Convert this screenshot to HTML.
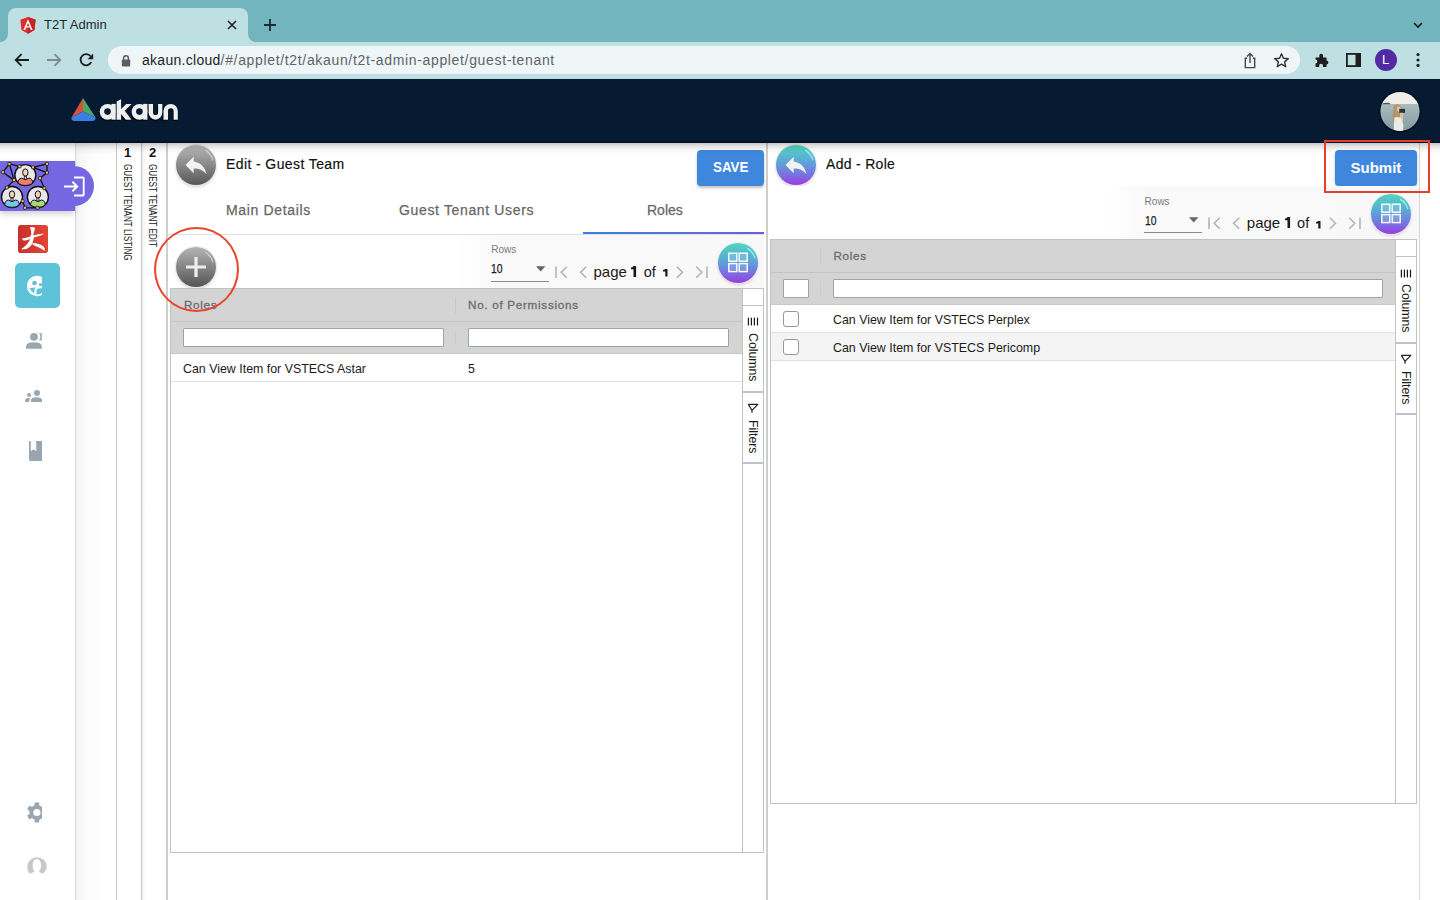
<!DOCTYPE html>
<html><head><meta charset="utf-8">
<style>
*{box-sizing:border-box;margin:0;padding:0}
html,body{width:1440px;height:900px;overflow:hidden;background:#fff;font-family:"Liberation Sans",sans-serif;}
.a{position:absolute}
.t{position:absolute;line-height:1;white-space:nowrap}
</style></head><body>
<!-- browser chrome -->
<div class="a" style="left:0;top:0;width:1440px;height:42px;background:#72b5be"></div>
<div class="a" style="left:8px;top:8px;width:240px;height:34px;background:#bfe0e3;border-radius:8px 8px 0 0"></div>
<div class="a" style="left:0;top:42px;width:1440px;height:37px;background:#bfe0e3"></div>
<div class="a" style="left:108px;top:46px;width:1192px;height:28px;background:#eef6f7;border-radius:14px"></div>


<!-- tab curves -->
<div class="a" style="left:0;top:34px;width:8px;height:8px;background:#bfe0e3"></div>
<div class="a" style="left:0;top:34px;width:8px;height:8px;background:#72b5be;border-radius:0 0 8px 0"></div>
<div class="a" style="left:248px;top:34px;width:8px;height:8px;background:#bfe0e3"></div>
<div class="a" style="left:248px;top:34px;width:8px;height:8px;background:#72b5be;border-radius:0 0 0 8px"></div>
<!-- angular icon -->
<svg class="a" style="left:20px;top:17px" width="16" height="17" viewBox="0 0 16 17">
<path d="M8 0L15.6 2.8 14.5 13 8 16.8 1.5 13 .4 2.8Z" fill="#dd2c2c"/>
<path d="M8 0L15.6 2.8 14.5 13 8 16.8Z" fill="#c42626"/>
<path d="M8 2.2L3.4 13h1.8l.95-2.4h3.7l.95 2.4h1.8ZM8 5.9l1.45 3.3h-2.9Z" fill="#fff" fill-rule="evenodd"/>
</svg>
<div class="t" style="left:44px;top:18px;font-size:13px;color:#1d2a2c;letter-spacing:0px">T2T Admin</div>
<svg class="a" style="left:226px;top:19px" width="12" height="12" viewBox="0 0 12 12"><path d="M2 2L10 10M10 2L2 10" stroke="#1b1b1b" stroke-width="1.5"/></svg>
<svg class="a" style="left:262px;top:17px" width="16" height="16" viewBox="0 0 16 16"><path d="M8 2V14M2 8H14" stroke="#1f2a2c" stroke-width="1.8"/></svg>
<svg class="a" style="left:1410px;top:19px" width="16" height="12" viewBox="0 0 16 12"><path d="M4 4L8 8 12 4" stroke="#111" stroke-width="1.6" fill="none"/></svg>

<!-- nav -->
<svg class="a" style="left:13px;top:52px" width="18" height="16" viewBox="0 0 18 16"><path d="M16 8H3M8.5 2.2L2.7 8 8.5 13.8" stroke="#1c1c1c" stroke-width="1.8" fill="none"/></svg>
<svg class="a" style="left:45px;top:52px" width="18" height="16" viewBox="0 0 18 16"><path d="M2 8H15M9.5 2.2L15.3 8 9.5 13.8" stroke="#7d8d8f" stroke-width="1.8" fill="none"/></svg>
<svg class="a" style="left:78px;top:52px" width="17" height="16" viewBox="0 0 17 16"><path d="M13.2 10.2A5.6 5.6 0 1 1 12.6 4.2" stroke="#1c1c1c" stroke-width="1.8" fill="none"/><path d="M15.2 1.6V7.2H9.6Z" fill="#1c1c1c"/></svg>
<!-- lock -->
<svg class="a" style="left:121px;top:54px" width="10" height="13" viewBox="0 0 10 13"><path d="M2.6 6V4.2A2.4 2.4 0 0 1 7.4 4.2V6" stroke="#5b5f61" stroke-width="1.5" fill="none"/><rect x=".8" y="5.6" width="8.4" height="6.8" rx="1" fill="#5b5f61"/></svg>
<div class="t" style="left:142px;top:53px;font-size:14px;color:#1f1f1f;letter-spacing:.28px">akaun.cloud<span style="color:#5f6368;letter-spacing:.66px">/#/applet/t2t/akaun/t2t-admin-applet/guest-tenant</span></div>
<!-- right toolbar icons -->
<svg class="a" style="left:1242px;top:52px" width="16" height="17" viewBox="0 0 16 17"><path d="M5.2 6.3H3.3V15.6H12.7V6.3H10.8" stroke="#474747" stroke-width="1.4" fill="none"/><path d="M8 11V1.8M5 4.6L8 1.6 11 4.6" stroke="#474747" stroke-width="1.4" fill="none"/></svg>
<svg class="a" style="left:1273px;top:52px" width="17" height="17" viewBox="0 0 17 17"><path d="M8.5 1.8L10.4 6.3 15.3 6.7 11.6 9.9 12.7 14.7 8.5 12.2 4.3 14.7 5.4 9.9 1.7 6.7 6.6 6.3Z" stroke="#333" stroke-width="1.4" fill="none" stroke-linejoin="round"/></svg>
<svg class="a" style="left:1314px;top:52px" width="16" height="16" viewBox="0 0 16 16"><path d="M1.5 5.5H5.3V3.6A1.9 1.9 0 0 1 9.1 3.6V5.5H12.5V8.6A1.9 1.9 0 0 1 12.5 12.4V15H9V13.6A1.9 1.9 0 0 0 5.2 13.6V15H1.5V11.4A1.9 1.9 0 0 0 1.5 7.6Z" fill="#1f1f1f"/></svg>
<svg class="a" style="left:1346px;top:53px" width="16" height="14" viewBox="0 0 16 14"><rect x=".9" y=".9" width="13.2" height="12.2" fill="none" stroke="#1f1f1f" stroke-width="1.8"/><rect x="9.5" y="1" width="5" height="12" fill="#1f1f1f"/></svg>
<div class="a" style="left:1375px;top:49px;width:22px;height:22px;border-radius:50%;background:#4f2aa4"></div>
<div class="t" style="left:1382px;top:53px;font-size:13px;color:#fff">L</div>
<svg class="a" style="left:1414px;top:52px" width="8" height="16" viewBox="0 0 8 16"><circle cx="4" cy="2.6" r="1.6" fill="#1f1f1f"/><circle cx="4" cy="8" r="1.6" fill="#1f1f1f"/><circle cx="4" cy="13.4" r="1.6" fill="#1f1f1f"/></svg>

<!-- header -->
<div class="a" style="left:0;top:79px;width:1440px;height:63.5px;background:linear-gradient(180deg,#061a31 0,#061a31 96%,#000a24 100%)"></div>


<!-- logo -->
<svg class="a" style="left:69px;top:96px" width="30" height="28" viewBox="0 0 30 28">
<path d="M14 2L2.5 21.5 14 15.5Z" fill="#d9503b"/>
<path d="M14 2L26.5 21.5 14 15.5Z" fill="#4aa864"/>
<path d="M14 15.5L2.5 21.5Q2 24.5 5 25H23.5Q27 24.5 26.5 21.5Z" fill="#3a7fe6"/>
</svg>
<svg class="a" style="left:96px;top:94px" width="88" height="32" viewBox="0 0 88 32">
<g fill="#000510" transform="translate(-.9 1.3)"><circle cx="11.6" cy="17.8" r="7.9"/><rect x="15.5" y="9.9" width="4.2" height="15.8"/>
<path d="M20.6 7.4L25.1 5.3V25.7H20.6Z"/><path d="M24.6 15.6L30.2 9.9H35.6L28.8 16.8 35.4 25.7H29.8L24.6 19.6Z"/>
<circle cx="43.5" cy="17.8" r="7.9"/><rect x="47.2" y="9.9" width="4.2" height="15.8"/>
<path d="M52.6 9.9H57V18.4A2.55 2.55 0 0 0 62.1 18.4V9.9H66.3V18.6A6.85 7.1 0 0 1 52.6 18.6Z"/>
<path d="M67.5 25.7V17A7.15 7.1 0 0 1 81.8 17V25.7H77.6V17A2.8 2.7 0 0 0 72 17V25.7Z"/></g>
<g fill="#000510" transform="translate(-.9 1.3)"></g>
<g fill="#efefef"><circle cx="11.6" cy="17.8" r="7.9"/><rect x="15.5" y="9.9" width="4.2" height="15.8"/>
<path d="M20.6 7.4L25.1 5.3V25.7H20.6Z"/><path d="M24.6 15.6L30.2 9.9H35.6L28.8 16.8 35.4 25.7H29.8L24.6 19.6Z"/>
<circle cx="43.5" cy="17.8" r="7.9"/><rect x="47.2" y="9.9" width="4.2" height="15.8"/>
<path d="M52.6 9.9H57V18.4A2.55 2.55 0 0 0 62.1 18.4V9.9H66.3V18.6A6.85 7.1 0 0 1 52.6 18.6Z"/>
<path d="M67.5 25.7V17A7.15 7.1 0 0 1 81.8 17V25.7H77.6V17A2.8 2.7 0 0 0 72 17V25.7Z"/></g>
<g fill="#061a31"><circle cx="11.5" cy="17.6" r="3.3"/><circle cx="43.4" cy="17.6" r="3.3"/></g>
</svg>
<!-- avatar -->
<svg class="a" style="left:1378px;top:89px" width="44" height="45" viewBox="1378 89 44 45">
<defs><clipPath id="avc"><circle cx="1400" cy="111.5" r="19.6"/></clipPath>
<linearGradient id="sea" x1="0" y1="0" x2="0" y2="1"><stop offset="0" stop-color="#a9bcbf"/><stop offset="1" stop-color="#7f979b"/></linearGradient></defs>
<circle cx="1400" cy="111.5" r="20.8" fill="#020a18"/>
<g clip-path="url(#avc)">
<rect x="1378" y="89" width="44" height="16" fill="#efeee8"/>
<rect x="1378" y="104" width="44" height="30" fill="url(#sea)"/>
<path d="M1381 104.2Q1384 102.2 1387 102.8Q1389 102.4 1391 104.2Z" fill="#4a5a58"/>
<path d="M1393.5 107Q1394 104 1397.5 104.2Q1400.5 104.6 1400.8 108L1400.2 120Q1398 124 1393 122.5Q1392 115 1393.5 107Z" fill="#b3966f"/>
<path d="M1397 106.5Q1399.5 106 1401.2 108.5L1400.8 112Q1398.5 112.5 1397.2 111Z" fill="#e2c6a8"/>
<rect x="1399.2" y="108.8" width="5.8" height="4.2" rx=".8" fill="#2e3538"/>
<path d="M1400 112.8H1403.2L1402.8 125H1400.4Z" fill="#e0c2a2"/>
<path d="M1394.5 117.5Q1397 116.5 1400.5 117.5L1403.5 125 1403 134H1394Q1393.5 125 1394.5 117.5Z" fill="#ecebe8"/>
</g>
</svg>
<!-- sidebar / breadcrumbs -->
<div class="a" style="left:75px;top:142.5px;width:1px;height:758px;background:#d6d6d6"></div>
<div class="a" style="left:76px;top:142.5px;width:40px;height:758px;background:linear-gradient(90deg,#f3f3f3 0,#f8f8f8 6px,#fcfcfc 14px,#fefefe 24px,#fff 40px)"></div>
<div class="a" style="left:116px;top:142.5px;width:1px;height:758px;background:#c8c8c8"></div>
<div class="a" style="left:141px;top:142.5px;width:1px;height:758px;background:#c8c8c8"></div>
<div class="a" style="left:142px;top:142.5px;width:4px;height:758px;background:linear-gradient(90deg,rgba(0,0,0,.06),rgba(0,0,0,0))"></div>
<div class="a" style="left:166px;top:142.5px;width:2px;height:758px;background:#cfcfcf"></div>
<div class="a" style="left:766px;top:142.5px;width:2px;height:758px;background:#cfcfcf"></div>
<div class="a" style="left:1419px;top:142.5px;width:1px;height:758px;background:#d6d6d6"></div>


<!-- sidebar apps -->
<div class="a" style="left:0;top:161px;width:75px;height:50px;background:#7567e2;box-shadow:0 3px 6px rgba(0,0,0,.18)"></div>
<div class="a" style="left:54px;top:166px;width:40px;height:40px;border-radius:50%;background:#7567e2"></div>
<svg class="a" style="left:0;top:160px" width="52" height="52" viewBox="0 0 52 52"><g stroke="#111" stroke-width="1.3" fill="none"><path d="M9.4 3.9L2.9 12.2 14 20.1 6.9 27.5M9.4 3.9L19.5 6.4M33 7.3L47 3.9 47 12.6 40 18.2 44.4 28.2M33 7.3L47 12.6M9.4 3.9L14 20.1M2.9 12.2L14 20.1M22.6 41.1L25 47.8 37.5 47.8"/></g><circle cx="25.35" cy="15.1" r="10.5" fill="#e8e8ec" stroke="#111" stroke-width="1.4"/><path d="M18.150000000000002 23.299999999999997Q17.75 18.7 21.75 18.1L25.35 19.7 28.950000000000003 18.1Q32.95 18.7 32.550000000000004 23.299999999999997Q29.35 25.5 25.35 25.5Q21.35 25.5 18.150000000000002 23.299999999999997Z" fill="#ef8068" stroke="#111" stroke-width="1"/><rect x="24.25" y="16.1" width="2.2" height="3" fill="#e9cdb0" stroke="#111" stroke-width=".7"/><ellipse cx="25.35" cy="12.5" rx="2.7" ry="3.6" fill="#f1d3b3" stroke="#111" stroke-width="1"/><circle cx="12" cy="37" r="10.5" fill="#e8e8ec" stroke="#111" stroke-width="1.4"/><path d="M4.8 45.2Q4.4 40.6 8.4 40L12 41.6 15.6 40Q19.6 40.6 19.2 45.2Q16 47.4 12 47.4Q8 47.4 4.8 45.2Z" fill="#70c8ee" stroke="#111" stroke-width="1"/><rect x="10.9" y="38" width="2.2" height="3" fill="#e9cdb0" stroke="#111" stroke-width=".7"/><ellipse cx="12" cy="34.4" rx="2.7" ry="3.6" fill="#f1d3b3" stroke="#111" stroke-width="1"/><circle cx="37.9" cy="37" r="10.5" fill="#e8e8ec" stroke="#111" stroke-width="1.4"/><path d="M30.7 45.2Q30.299999999999997 40.6 34.3 40L37.9 41.6 41.5 40Q45.5 40.6 45.1 45.2Q41.9 47.4 37.9 47.4Q33.9 47.4 30.7 45.2Z" fill="#a9d77c" stroke="#111" stroke-width="1"/><rect x="36.8" y="38" width="2.2" height="3" fill="#e9cdb0" stroke="#111" stroke-width=".7"/><ellipse cx="37.9" cy="34.4" rx="2.7" ry="3.6" fill="#f1d3b3" stroke="#111" stroke-width="1"/><g fill="#e6bf5c" stroke="#111" stroke-width=".8"><rect x="7.9" y="2.4" width="3" height="3" rx=".8"/><rect x="1.4" y="10.7" width="3" height="3" rx=".8"/><rect x="12.5" y="18.6" width="3" height="3" rx=".8"/><rect x="18.0" y="4.9" width="3" height="3" rx=".8"/><rect x="31.5" y="5.8" width="3" height="3" rx=".8"/><rect x="45.5" y="2.4" width="3" height="3" rx=".8"/><rect x="45.5" y="11.1" width="3" height="3" rx=".8"/><rect x="38.5" y="16.7" width="3" height="3" rx=".8"/><rect x="5.4" y="26.0" width="3" height="3" rx=".8"/><rect x="42.9" y="26.7" width="3" height="3" rx=".8"/><rect x="21.1" y="39.6" width="3" height="3" rx=".8"/><rect x="23.5" y="46.3" width="3" height="3" rx=".8"/><rect x="36.0" y="46.3" width="3" height="3" rx=".8"/></g></svg>
<svg class="a" style="left:63px;top:176px" width="22" height="21" viewBox="0 0 22 21"><path d="M11 1.5H19.8A.9 .9 0 0 1 20.7 2.4V18.6A.9 .9 0 0 1 19.8 19.5H11" stroke="#fff" stroke-width="1.9" fill="none"/><path d="M1 10.5H14.2M9.4 5.8L14.2 10.5 9.4 15.2" stroke="#fff" stroke-width="1.9" fill="none"/></svg>
<!-- red app -->
<svg class="a" style="left:18px;top:225px" width="30" height="28" viewBox="0 0 30 28">
<defs><linearGradient id="rg" x1="0" x2="1"><stop offset="0" stop-color="#c62f2e"/><stop offset=".5" stop-color="#d53a30"/><stop offset="1" stop-color="#e04735"/></linearGradient></defs>
<rect width="30" height="28" rx="2.8" fill="url(#rg)"/>
<g fill="#fff">
<path d="M12 2.3Q14.5 1.2 17.2 3Q16 6 15.6 9.5L13.2 9.8Q13.6 6 12 2.3Z"/>
<path d="M4.2 13.4Q9 13 15 10.5Q20 8.6 26.3 8.4Q23.5 10.5 19.5 11.5Q15 12.5 11 14.6Q7 16.2 4.6 15Z"/>
<path d="M13 9.5L16 10Q15.8 15 14.2 19Q12 22.5 8.5 24L3.4 24.4Q3.5 23.2 5.5 22.6Q9.5 19.5 11.5 15.5Q12.6 12.8 13 9.5Z"/>
<path d="M14.6 18Q21 18.3 25.5 21.5Q27.5 23.5 26.5 25.8Q22 22.6 17.5 21Q15.5 20.3 14.6 19.6Z"/>
</g></svg>
<!-- teal app -->
<div class="a" style="left:15px;top:263px;width:45px;height:45px;border-radius:5px;background:#5ec2d8"></div>
<svg class="a" style="left:26px;top:275px" width="18" height="23" viewBox="0 0 18 23">
<defs><clipPath id="tc"><rect x="0" y="0" width="16" height="23"/></clipPath></defs>
<g clip-path="url(#tc)"><circle cx="11" cy="11" r="10.2" fill="#fff"/></g>
<circle cx="8.5" cy="8" r="2.3" fill="#5ec2d8"/>
<circle cx="14.5" cy="9.6" r="1.6" fill="#5ec2d8"/>
<path d="M3.3 13.2L9.6 12.3Q8 15 8 18.5Q5 16 3.3 13.2Z" fill="#5ec2d8"/>
<path d="M10.5 14.5Q12 13 16 13.2V18Q13 19.5 10.5 19.5Z" fill="#5ec2d8"/>
</svg>
<!-- grey icons -->
<svg class="a" style="left:25px;top:332px" width="18" height="18" viewBox="0 0 18 18"><circle cx="9" cy="4.8" r="3.9" fill="#9aa7b1"/><path d="M14 1.2H16.8V8.6H14Q15.4 6.8 15.4 4.9Q15.4 3 14 1.2Z" fill="#9aa7b1"/><path d="M1 16.8V14.6Q1 10.3 8.9 10.3Q16.8 10.3 16.8 14.6V16.8Z" fill="#9aa7b1"/></svg>
<svg class="a" style="left:24px;top:389px" width="19" height="14" viewBox="0 0 19 14"><circle cx="13" cy="3.9" r="3" fill="#9aa7b1"/><path d="M7 12.9V11.2Q7 8.2 12.5 8.2Q18 8.2 18 11.2V12.9Z" fill="#9aa7b1"/><circle cx="5" cy="5.9" r="2" fill="#9aa7b1"/><path d="M1 12.9V11.4Q1 9.1 3.6 9H5.9L5 12.9Z" fill="#9aa7b1"/></svg>
<svg class="a" style="left:28px;top:440px" width="15" height="22" viewBox="0 0 15 22">
<path d="M1.6 1H14V21H2.6Q1 21 1 19.4V1.6Z" fill="#9aa6af"/>
<path d="M2.8 1V11.2L5.5 9.2 8.2 11.2V1Z" fill="#fff"/>
</svg>
<svg class="a" style="left:25px;top:800px" width="17" height="25" viewBox="0 0 17 25"><g fill="#9aa7b1"><circle cx="11.9" cy="12.5" r="7.6"/><rect x="9.6" y="2.5" width="4.6" height="4.5" rx=".6" transform="rotate(0 11.9 12.5)"/><rect x="9.6" y="2.5" width="4.6" height="4.5" rx=".6" transform="rotate(60 11.9 12.5)"/><rect x="9.6" y="2.5" width="4.6" height="4.5" rx=".6" transform="rotate(120 11.9 12.5)"/><rect x="9.6" y="2.5" width="4.6" height="4.5" rx=".6" transform="rotate(180 11.9 12.5)"/><rect x="9.6" y="2.5" width="4.6" height="4.5" rx=".6" transform="rotate(240 11.9 12.5)"/><rect x="9.6" y="2.5" width="4.6" height="4.5" rx=".6" transform="rotate(300 11.9 12.5)"/></g><circle cx="11.9" cy="12.5" r="3.6" fill="#fff"/></svg>
<svg class="a" style="left:26px;top:856px" width="22" height="19" viewBox="0 0 22 19"><path d="M3.8 17.7Q1.2 15 1.2 10.5A9.8 9.3 0 0 1 20.8 10.5Q20.8 15 16.2 17.7Q14 16.8 13 15Q15.2 13 15 9Q14.8 3 10.8 3Q6.8 3 6.6 9Q6.4 13 8.6 15Q7.6 16.8 3.8 17.7Z" fill="#c8c8c8"/></svg>
<!-- breadcrumbs -->
<div class="t" style="left:124px;top:146px;font-size:13px;font-weight:bold;color:#111">1</div>
<div class="t" style="left:149px;top:146px;font-size:13px;font-weight:bold;color:#111">2</div>
<div class="t" style="left:133px;top:164px;font-size:10.5px;color:#222;transform:rotate(90deg) scaleX(.778);transform-origin:0 0">GUEST TENANT LISTING</div>
<div class="t" style="left:158px;top:164px;font-size:10.5px;color:#222;transform:rotate(90deg) scaleX(.772);transform-origin:0 0">GUEST TENANT EDIT</div>


<!-- LEFT PANEL header -->
<div class="a" style="left:168px;top:234px;width:596px;height:1px;background:#e0e0e0"></div>
<div class="a" style="left:168px;top:235px;width:596px;height:53px;background:linear-gradient(90deg,#fff 0,#fff 48%,#f9f9f9 56%,#f8f8f8 100%)"></div>
<div class="a" style="left:583px;top:232px;width:181px;height:2px;background:linear-gradient(90deg,#3b80dc,#5a6fe0 60%,#6a5ce2)"></div>

<div class="a" style="left:176px;top:145px;width:40px;height:40px;border-radius:50%;background:linear-gradient(180deg,#bababa,#575757);box-shadow:0 0 0 1px #ece8f0,0 2px 3px rgba(0,0,0,.18)"></div>
<svg class="a" style="left:176px;top:145px" width="40" height="40" viewBox="0 0 40 40"><path d="M29.3 5.1A17.6 17.6 0 0 1 37 15.4" stroke="rgba(255,255,255,.6)" stroke-width="1.1" fill="none"/></svg>
<svg class="a" style="left:182px;top:151px" width="28" height="28" viewBox="0 0 24 24"><path d="M10 9V5l-7 7 7 7v-4.1c5 0 8.5 1.6 11 5.1-1-5-4-10-11-11z" fill="#f2f2f2"/></svg>
<div class="t" style="left:226px;top:157.4px;font-size:14px;color:#111;letter-spacing:.4px;-webkit-text-stroke:.18px #111">Edit - Guest Team</div>

<div class="a" style="left:697px;top:150px;width:67px;height:36px;border-radius:4px;background:#3f87dc;box-shadow:0 2px 3px rgba(0,0,0,.25)"></div>
<div class="t" style="left:712.5px;top:160.3px;font-size:14.5px;font-weight:bold;color:#fff;transform:scaleX(.92);transform-origin:0 0">SAVE</div>

<div class="t" style="left:226px;top:202.5px;font-size:14px;color:#666;letter-spacing:.65px;-webkit-text-stroke:.25px #666">Main Details</div>
<div class="t" style="left:399px;top:202.5px;font-size:14px;color:#666;letter-spacing:.65px;-webkit-text-stroke:.25px #666">Guest Tenant Users</div>
<div class="t" style="left:647px;top:202.5px;font-size:14px;color:#666;letter-spacing:0;-webkit-text-stroke:.25px #666">Roles</div>

<!-- plus btn -->
<div class="a" style="left:176px;top:247px;width:40px;height:40px;border-radius:50%;background:linear-gradient(180deg,#b4b4b4,#555);box-shadow:0 0 0 1px #ece8f0,0 2px 3px rgba(0,0,0,.18)"></div>
<svg class="a" style="left:176px;top:247px" width="40" height="40" viewBox="0 0 40 40"><path d="M29.3 5.1A17.6 17.6 0 0 1 37 15.4" stroke="rgba(255,255,255,.6)" stroke-width="1.1" fill="none"/><path d="M20 10V30M10 20H30" stroke="#eee" stroke-width="3.2"/></svg>

<!--PAGL-->
<div class="t" style="left:491.3px;top:245.3px;font-size:10px;color:#7a7a7a">Rows</div>
<div class="t" style="left:491.3px;top:262.3px;font-size:13.3px;color:#1a1a1a;-webkit-text-stroke:.25px #1a1a1a;transform:scaleX(.78);transform-origin:0 0">10</div>
<div class="a" style="left:491.0px;top:281.0px;width:58px;height:1px;background:#8a8a8a"></div>
<svg class="a" style="left:535.5px;top:266.0px" width="10" height="6" viewBox="0 0 10 6"><path d="M0 .3H9.4L4.7 5.4Z" fill="#666"/></svg>
<svg class="a" style="left:553.0px;top:265.0px" width="16" height="15" viewBox="0 0 16 15"><path d="M3 1.5V13M13.8 1.8L8.2 7.3 13.8 12.8" stroke="#b4b4b4" stroke-width="1.6" fill="none"/></svg>
<svg class="a" style="left:577.0px;top:265.0px" width="12" height="15" viewBox="0 0 12 15"><path d="M9.2 1.8L3.6 7.3 9.2 12.8" stroke="#b4b4b4" stroke-width="1.6" fill="none"/></svg>
<div class="t" style="left:593.5px;top:264.1px;font-size:15px;color:#1a1a1a">page</div>
<svg class="a" style="left:631.4px;top:265.9px" width="6" height="11" viewBox="0 0 6 11"><path d="M2.4 0H5.1V10.9H2.5V3.3H0V1.6Q1.9 1.5 2.4 0Z" fill="#1a1a1a"/></svg>
<div class="t" style="left:643.8px;top:264.5px;font-size:14.5px;color:#1a1a1a">of</div>
<svg class="a" style="left:662.9px;top:269.3px" width="5" height="8" viewBox="0 0 5 8"><path d="M2 0H4.5V7.5H2.3V2.4H0V1.1Q1.6 1 2 0Z" fill="#1a1a1a"/></svg>
<svg class="a" style="left:674.0px;top:265.0px" width="12" height="15" viewBox="0 0 12 15"><path d="M2.8 1.8L8.4 7.3 2.8 12.8" stroke="#b4b4b4" stroke-width="1.6" fill="none"/></svg>
<svg class="a" style="left:694.0px;top:265.0px" width="16" height="15" viewBox="0 0 16 15"><path d="M13 1.5V13M2.2 1.8L7.8 7.3 2.2 12.8" stroke="#b4b4b4" stroke-width="1.6" fill="none"/></svg>
<div class="a" style="left:718.0px;top:243.0px;width:40px;height:40px;border-radius:50%;background:linear-gradient(180deg,#4fd6bd 0,#5aa6d8 45%,#7a6fe0 75%,#9a3ce0 100%);box-shadow:0 0 0 1px #ece8f0,0 2px 3px rgba(0,0,0,.15)"></div>
<svg class="a" style="left:718.0px;top:243.0px" width="40" height="40" viewBox="0 0 40 40"><path d="M29.3 5.1A17.6 17.6 0 0 1 37 15.4" stroke="rgba(170,255,255,.75)" stroke-width="1.3" fill="none"/>
<g stroke="#fff" stroke-width="1.4" fill="rgba(255,255,255,.15)"><rect x="10.8" y="10.2" width="8" height="8"/><rect x="21.2" y="10.2" width="8" height="8"/><rect x="10.8" y="20.6" width="8" height="8"/><rect x="21.2" y="20.6" width="8" height="8"/></g></svg>
<!--/PAGL-->
<!-- left table -->
<div class="a" style="left:170px;top:288px;width:594px;height:565px;border:1px solid #bdc3c7"></div>
<div class="a" style="left:171px;top:289px;width:572px;height:64px;background:#d4d4d4"></div>
<div class="a" style="left:171px;top:321px;width:572px;height:1px;background:#bfc5c8"></div>
<div class="a" style="left:171px;top:353px;width:572px;height:1px;background:#c4c9cc"></div>
<div class="a" style="left:171px;top:381px;width:572px;height:1px;background:#dde1e3"></div>
<div class="a" style="left:455px;top:297px;width:1px;height:16px;background:#c3c8cb"></div>
<div class="a" style="left:455px;top:330px;width:1px;height:15px;background:#c8cdd0"></div>
<div class="t" style="left:184px;top:299.3px;font-size:11.7px;color:#6b6b6b;-webkit-text-stroke:.28px #6b6b6b;letter-spacing:.65px">Roles</div>
<div class="t" style="left:468px;top:299.3px;font-size:11.7px;color:#6b6b6b;-webkit-text-stroke:.28px #6b6b6b;letter-spacing:.7px">No. of Permissions</div>
<div class="a" style="left:183px;top:328px;width:261px;height:19px;background:#fff;border:1px solid #9aa6a8;border-radius:1px"></div>
<div class="a" style="left:468px;top:328px;width:261px;height:19px;background:#fff;border:1px solid #9aa6a8;border-radius:1px"></div>
<div class="t" style="left:183px;top:363px;font-size:12.4px;color:#1a1a1a">Can View Item for VSTECS Astar</div>
<div class="t" style="left:468px;top:363px;font-size:12.4px;color:#1a1a1a">5</div>
<!-- left side bar -->
<div class="a" style="left:742px;top:289px;width:1px;height:563px;background:#bdc3c7"></div>
<div class="a" style="left:743px;top:305px;width:20px;height:1px;background:#bdc3c7"></div>
<div class="a" style="left:743px;top:391px;width:20px;height:1.5px;background:#bdc3c7"></div>
<div class="a" style="left:743px;top:462px;width:20px;height:1.5px;background:#bdc3c7"></div>
<svg class="a" style="left:746px;top:316.4px" width="14" height="11" viewBox="0 0 14 11"><g stroke="#1a1a1a" stroke-width="1.2" stroke-linecap="round"><path d="M2.4 2V9M5.4 2V9M8.4 2V9M11.5 2V9"/></g></svg>
<div class="t" style="left:759px;top:333.3px;font-size:12.3px;color:#1a1a1a;transform:rotate(90deg);transform-origin:0 0">Columns</div>
<svg class="a" style="left:746px;top:402px" width="14" height="13" viewBox="0 0 14 13"><path d="M2.3 2.4H11.8L6 8.3V10.8" stroke="#222" stroke-width="1.2" fill="none" stroke-linejoin="round"/><path d="M2.3 2.4 6 8.3" stroke="#222" stroke-width="1.2"/></svg>
<div class="t" style="left:759px;top:419.6px;font-size:12.3px;color:#1a1a1a;transform:rotate(90deg);transform-origin:0 0">Filters</div>

<!-- red circle annotation -->
<div class="a" style="left:154.4px;top:226.7px;width:84.5px;height:85px;border-radius:50%;border:2.8px solid #e8452c"></div>

<!-- RIGHT PANEL -->
<div class="a" style="left:776px;top:145px;width:40px;height:40px;border-radius:50%;background:linear-gradient(180deg,#52d8bc 0,#5ea2da 45%,#7a70e0 75%,#9c3adf 100%);box-shadow:0 0 0 1px #ece8f0,0 2px 3px rgba(0,0,0,.18)"></div>
<svg class="a" style="left:776px;top:145px" width="40" height="40" viewBox="0 0 40 40"><path d="M29.3 5.1A17.6 17.6 0 0 1 37 15.4" stroke="rgba(170,255,255,.75)" stroke-width="1.3" fill="none"/></svg>
<svg class="a" style="left:782px;top:151px" width="28" height="28" viewBox="0 0 24 24"><path d="M10 9V5l-7 7 7 7v-4.1c5 0 8.5 1.6 11 5.1-1-5-4-10-11-11z" fill="#f2f2f2"/></svg>
<div class="t" style="left:826px;top:157.4px;font-size:14px;color:#111;letter-spacing:.3px;-webkit-text-stroke:.18px #111">Add - Role</div>

<div class="a" style="left:1334.5px;top:150px;width:82.5px;height:36px;border-radius:4px;background:#3f87dc;box-shadow:0 2px 3px rgba(0,0,0,.25)"></div>
<div class="t" style="left:1350.5px;top:160px;font-size:15px;font-weight:bold;color:#fff">Submit</div>

<div class="a" style="left:768px;top:186px;width:651px;height:53px;background:linear-gradient(90deg,#fff 0,#fff 52%,#f9f9f9 58%,#f8f8f8 100%)"></div>
<!--PAGR-->
<div class="t" style="left:1144.6px;top:196.6px;font-size:10px;color:#7a7a7a">Rows</div>
<div class="t" style="left:1144.6px;top:213.6px;font-size:13.3px;color:#1a1a1a;-webkit-text-stroke:.25px #1a1a1a;transform:scaleX(.78);transform-origin:0 0">10</div>
<div class="a" style="left:1144.3px;top:232.3px;width:58px;height:1px;background:#8a8a8a"></div>
<svg class="a" style="left:1188.8px;top:217.3px" width="10" height="6" viewBox="0 0 10 6"><path d="M0 .3H9.4L4.7 5.4Z" fill="#666"/></svg>
<svg class="a" style="left:1206.3px;top:216.3px" width="16" height="15" viewBox="0 0 16 15"><path d="M3 1.5V13M13.8 1.8L8.2 7.3 13.8 12.8" stroke="#b4b4b4" stroke-width="1.6" fill="none"/></svg>
<svg class="a" style="left:1230.3px;top:216.3px" width="12" height="15" viewBox="0 0 12 15"><path d="M9.2 1.8L3.6 7.3 9.2 12.8" stroke="#b4b4b4" stroke-width="1.6" fill="none"/></svg>
<div class="t" style="left:1246.8px;top:215.4px;font-size:15px;color:#1a1a1a">page</div>
<svg class="a" style="left:1284.7px;top:217.2px" width="6" height="11" viewBox="0 0 6 11"><path d="M2.4 0H5.1V10.9H2.5V3.3H0V1.6Q1.9 1.5 2.4 0Z" fill="#1a1a1a"/></svg>
<div class="t" style="left:1297.1px;top:215.8px;font-size:14.5px;color:#1a1a1a">of</div>
<svg class="a" style="left:1316.2px;top:220.6px" width="5" height="8" viewBox="0 0 5 8"><path d="M2 0H4.5V7.5H2.3V2.4H0V1.1Q1.6 1 2 0Z" fill="#1a1a1a"/></svg>
<svg class="a" style="left:1327.3px;top:216.3px" width="12" height="15" viewBox="0 0 12 15"><path d="M2.8 1.8L8.4 7.3 2.8 12.8" stroke="#b4b4b4" stroke-width="1.6" fill="none"/></svg>
<svg class="a" style="left:1347.3px;top:216.3px" width="16" height="15" viewBox="0 0 16 15"><path d="M13 1.5V13M2.2 1.8L7.8 7.3 2.2 12.8" stroke="#b4b4b4" stroke-width="1.6" fill="none"/></svg>
<div class="a" style="left:1371.3px;top:194.3px;width:40px;height:40px;border-radius:50%;background:linear-gradient(180deg,#4fd6bd 0,#5aa6d8 45%,#7a6fe0 75%,#9a3ce0 100%);box-shadow:0 0 0 1px #ece8f0,0 2px 3px rgba(0,0,0,.15)"></div>
<svg class="a" style="left:1371.3px;top:194.3px" width="40" height="40" viewBox="0 0 40 40"><path d="M29.3 5.1A17.6 17.6 0 0 1 37 15.4" stroke="rgba(170,255,255,.75)" stroke-width="1.3" fill="none"/>
<g stroke="#fff" stroke-width="1.4" fill="rgba(255,255,255,.15)"><rect x="10.8" y="10.2" width="8" height="8"/><rect x="21.2" y="10.2" width="8" height="8"/><rect x="10.8" y="20.6" width="8" height="8"/><rect x="21.2" y="20.6" width="8" height="8"/></g></svg>
<!--/PAGR-->
<!-- right table -->
<div class="a" style="left:770px;top:239px;width:647px;height:565px;border:1px solid #bdc3c7"></div>
<div class="a" style="left:771px;top:240px;width:625px;height:65px;background:#d4d4d4"></div>
<div class="a" style="left:771px;top:272px;width:625px;height:1px;background:#bfc5c8"></div>
<div class="a" style="left:771px;top:304px;width:625px;height:1px;background:#c4c9cc"></div>
<div class="a" style="left:771px;top:332px;width:625px;height:28px;background:#f4f4f4"></div>
<div class="a" style="left:771px;top:332px;width:625px;height:1px;background:#dde1e3"></div>
<div class="a" style="left:771px;top:360px;width:625px;height:1px;background:#dde1e3"></div>
<div class="a" style="left:820px;top:248px;width:1px;height:16px;background:#c3c8cb"></div>
<div class="a" style="left:820px;top:281px;width:1px;height:15px;background:#c8cdd0"></div>
<div class="t" style="left:833.5px;top:250.4px;font-size:11.7px;color:#6b6b6b;-webkit-text-stroke:.28px #6b6b6b;letter-spacing:.65px">Roles</div>
<div class="a" style="left:783px;top:279px;width:26px;height:19px;background:#fff;border:1px solid #9aa6a8;border-radius:1px"></div>
<div class="a" style="left:833px;top:279px;width:550px;height:19px;background:#fff;border:1px solid #9aa6a8;border-radius:1px"></div>
<div class="a" style="left:783px;top:311px;width:16px;height:16px;background:#fff;border:1px solid #8e9a9c;border-radius:3px"></div>
<div class="a" style="left:783px;top:339px;width:16px;height:16px;background:#fff;border:1px solid #8e9a9c;border-radius:3px"></div>
<div class="t" style="left:833px;top:313.8px;font-size:12.4px;color:#1a1a1a">Can View Item for VSTECS Perplex</div>
<div class="t" style="left:833px;top:341.8px;font-size:12.4px;color:#1a1a1a">Can View Item for VSTECS Pericomp</div>
<div class="a" style="left:1395px;top:240px;width:1px;height:563px;background:#bdc3c7"></div>
<div class="a" style="left:1396px;top:256px;width:20px;height:1px;background:#bdc3c7"></div>
<div class="a" style="left:1396px;top:342px;width:20px;height:1.5px;background:#bdc3c7"></div>
<div class="a" style="left:1396px;top:413px;width:20px;height:1.5px;background:#bdc3c7"></div>
<svg class="a" style="left:1399px;top:267.5px" width="14" height="11" viewBox="0 0 14 11"><g stroke="#1a1a1a" stroke-width="1.2" stroke-linecap="round"><path d="M2.4 2V9M5.4 2V9M8.4 2V9M11.5 2V9"/></g></svg>
<div class="t" style="left:1412px;top:284.4px;font-size:12.3px;color:#1a1a1a;transform:rotate(90deg);transform-origin:0 0">Columns</div>
<svg class="a" style="left:1399px;top:353px" width="14" height="13" viewBox="0 0 14 13"><path d="M2.3 2.4H11.8L6 8.3V10.8" stroke="#222" stroke-width="1.2" fill="none" stroke-linejoin="round"/><path d="M2.3 2.4 6 8.3" stroke="#222" stroke-width="1.2"/></svg>
<div class="t" style="left:1412px;top:371px;font-size:12.3px;color:#1a1a1a;transform:rotate(90deg);transform-origin:0 0">Filters</div>
<div class="a" style="left:0;top:142.5px;width:1440px;height:11px;background:linear-gradient(180deg,rgba(0,0,0,.22) 0,rgba(0,0,0,.12) 25%,rgba(0,0,0,.04) 60%,rgba(0,0,0,0) 100%)"></div>
<div class="a" style="left:1324px;top:140px;width:106px;height:53px;border:2px solid #e3402a"></div>
</body></html>
